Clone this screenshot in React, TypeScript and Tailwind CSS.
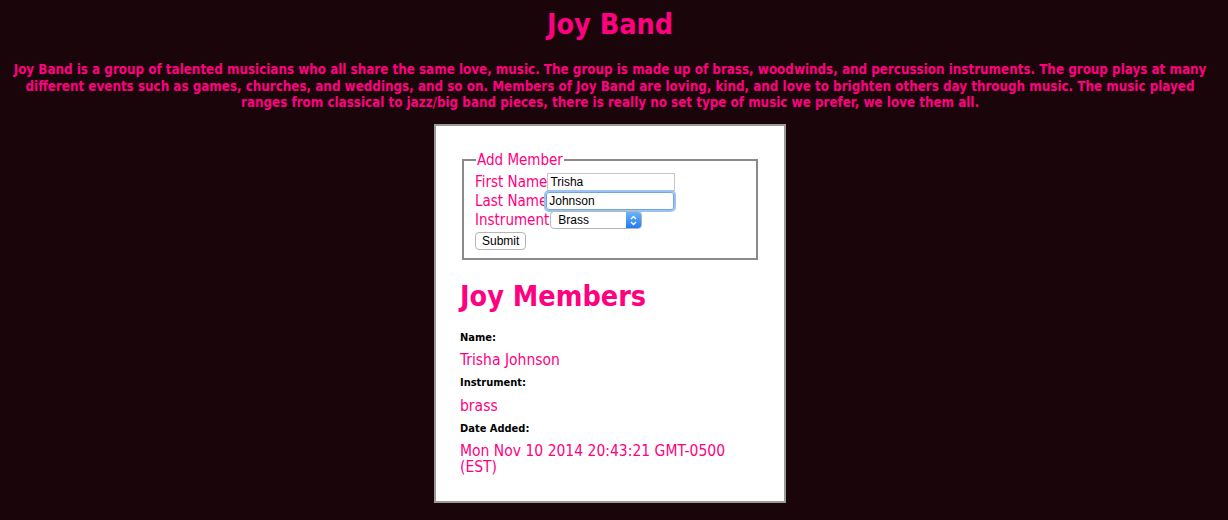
import React from "react";

const pink = "text-[#ff0080]";

function Field({ label, children }: { label: string; children: React.ReactNode }) {
  return (
    <div className="flex items-center h-[19px]">
      <span className={`text-[15px] leading-[19px] ${pink}`}>{label}</span>
      {children}
    </div>
  );
}

export default function App() {
  const [first, setFirst] = React.useState("Trisha");
  const [last, setLast] = React.useState("Johnson");

  return (
    <div className="min-h-[520px] bg-[#1a050b] font-['DejaVu_Sans_Condensed','DejaVu_Sans',sans-serif] text-center pb-4 pr-[8px]">
      <h1 className={`pt-[8px] text-[28.5px] leading-[34px] font-bold ${pink}`}>Joy Band</h1>
      <p className={`mt-[20px] whitespace-nowrap text-[13.3px] leading-[16.5px] font-bold ${pink}`}>
        Joy Band is a group of talented musicians who all share the same love, music. The group is made up of brass, woodwinds, and percussion instruments. The group plays at many
        <br />
        different events such as games, churches, and weddings, and so on. Members of Joy Band are loving, kind, and love to brighten others day through music. The music played
        <br />
        ranges from classical to jazz/big band pieces, there is really no set type of music we prefer, we love them all.
      </p>

      <div className="mx-auto mt-[12px] w-[352px] border-2 border-[#9a9a9a] bg-white px-[24px] pt-[26px] pb-[26px] text-left">
        <fieldset className="mx-[2px] border-2 border-[#8a8a8a] px-[11px] pb-[8px] pt-0">
          <legend className={`px-[1px] ml-[1px] text-[15px] leading-[17px] ${pink}`}>Add Member</legend>
          <div className="mt-[4px]">
            <Field label="First Name">
              <input
                value={first}
                onChange={(e) => setFirst(e.target.value)}
                className="ml-0 h-[18px] w-[128px] border border-[#c8c8c8] px-[2px] text-[12px] font-['Liberation_Sans',sans-serif] text-black outline-none"
              />
            </Field>
            <Field label="Last Name">
              <input
                value={last}
                onChange={(e) => setLast(e.target.value)}
                className="-ml-[1px] h-[18px] w-[128px] rounded-[3px] border border-[#6fa7e6] px-[2px] text-[12px] font-['Liberation_Sans',sans-serif] text-black outline-none shadow-[0_0_0_2px_#9cc3f0]"
              />
            </Field>
            <Field label="Instrument">
              <div className="ml-[1px] flex h-[18px] w-[92px] items-stretch overflow-hidden rounded-[4px] border border-[#b5b5b5] bg-white font-['Liberation_Sans',sans-serif] text-[12px] text-black">
                <span className="flex-1 pl-[7px] leading-[16px]">Brass</span>
                <span className="flex w-[15px] items-center justify-center bg-gradient-to-b from-[#6cb3fa] to-[#1f7cf0]">
                  <svg width="7" height="11" viewBox="0 0 7 11" fill="none" stroke="white" strokeWidth="1.3">
                    <path d="M1 4 L3.5 1.5 L6 4" />
                    <path d="M1 7 L3.5 9.5 L6 7" />
                  </svg>
                </span>
              </div>
            </Field>
            <button className="block mt-[2px] h-[18px] rounded-[4px] border border-[#b5b5b5] bg-white px-[6px] font-['Liberation_Sans',sans-serif] text-[12px] leading-[16px] text-black">
              Submit
            </button>
          </div>
        </fieldset>

        <h2 className={`mt-[19px] text-[28.5px] leading-[36px] font-bold ${pink}`}>Joy Members</h2>
        <div className="mt-[16px]">
          <div className="text-[11px] font-bold text-black leading-[14px]">Name:</div>
          <div className={`mt-[6px] text-[15.5px] leading-[18px] ${pink}`}>Trisha Johnson</div>
          <div className="mt-[7px] text-[11px] font-bold text-black leading-[14px]">Instrument:</div>
          <div className={`mt-[7px] text-[15.5px] leading-[18px] ${pink}`}>brass</div>
          <div className="mt-[7px] text-[11px] font-bold text-black leading-[14px]">Date Added:</div>
          <div className={`mt-[7px] text-[15.5px] leading-[16px] ${pink}`}>
            Mon Nov 10 2014 20:43:21 GMT-0500
            <br />
            (EST)
          </div>
        </div>
      </div>
    </div>
  );
}
